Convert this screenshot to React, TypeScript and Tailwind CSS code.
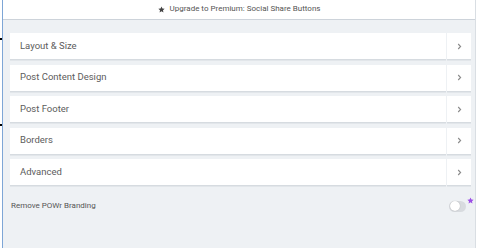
import React from "react";

const rows = ["Layout & Size", "Post Content Design", "Post Footer", "Borders", "Advanced"];

function Chevron() {
  return (
    <svg width="5" height="7" viewBox="0 0 5 7" fill="none">
      <path d="M1.2 1 L3.6 3.5 L1.2 6" stroke="#8a8a8a" strokeWidth="1.1" />
    </svg>
  );
}

export default function App() {
  return (
    <div
      className="w-[480px] h-[248px] flex bg-white overflow-hidden relative"
      style={{ fontFamily: "Roboto, 'Liberation Sans', sans-serif" }}
    >
      <div className="w-[2px] bg-white" />
      <div className="w-[1px] bg-[#7ea6d6]" />
      <div className="flex-1 flex flex-col border-r border-[#d9dee3] bg-[#eef1f4]">
        <div className="h-[20px] bg-white border-b border-[#cdd3da] flex items-center justify-center gap-[5px] pb-[1px]">
          <svg width="7" height="7" viewBox="0 0 24 24">
            <path
              d="M12 1.5l3.2 7 7.6.8-5.7 5.1 1.6 7.5L12 18l-6.7 3.9 1.6-7.5L1.2 9.3l7.6-.8z"
              fill="#444"
            />
          </svg>
          <span className="text-[8px] text-[#555] leading-none">
            Upgrade to Premium: Social Share Buttons
          </span>
        </div>
        <div className="flex flex-col gap-[5.5px] pl-[7px] pr-[4px] pt-[13px]">
          {rows.map((r) => (
            <div key={r} className="flex h-[26px] gap-[1px]">
              <div className="flex-1 bg-white flex items-center pl-[10px] shadow-[0_1.5px_0_#d6dbe0]">
                <span className="text-[9.5px] text-[#5c5c5c]">{r}</span>
              </div>
              <div className="w-[24px] bg-white flex items-center justify-center shadow-[0_1.5px_0_#d6dbe0]">
                <Chevron />
              </div>
            </div>
          ))}
        </div>
        <div className="flex items-center justify-between pl-[8px] pr-[9px] mt-[15px]">
          <span className="text-[8px] text-[#555]">Remove POWr Branding</span>
          <div className="relative">
            <div className="w-[17px] h-[11px] rounded-full bg-[#d8dbdf] relative">
              <div className="absolute left-[0.5px] top-[0.5px] w-[10px] h-[10px] rounded-full bg-white shadow-[0_0_1px_rgba(0,0,0,0.3)]" />
            </div>
            <svg
              className="absolute -right-[8px] -top-[4px]"
              width="7"
              height="7"
              viewBox="0 0 24 24"
            >
              <path
                d="M12 1.5l3.2 7 7.6.8-5.7 5.1 1.6 7.5L12 18l-6.7 3.9 1.6-7.5L1.2 9.3l7.6-.8z"
                fill="#9b4de6"
              />
            </svg>
          </div>
        </div>
      </div>
      <div className="w-[4px] bg-white" />
      <div className="absolute left-0 top-[38px] w-[2px] h-[2px] bg-black" />
      <div className="absolute left-0 top-[124px] w-[2px] h-[2px] bg-black" />
    </div>
  );
}
